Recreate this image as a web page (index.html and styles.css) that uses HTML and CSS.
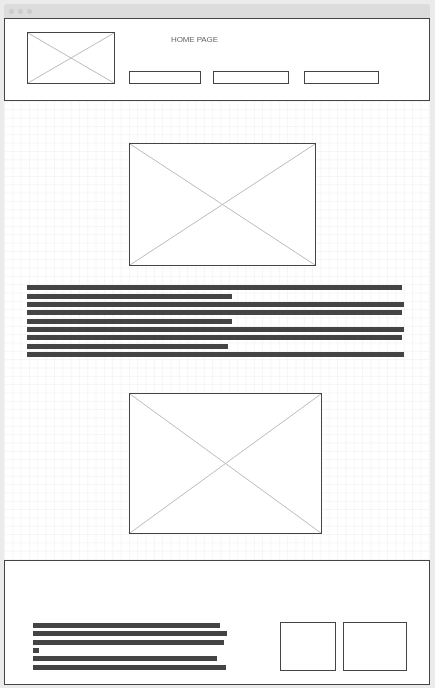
FILE: index.html
```html
<!DOCTYPE html>
<html lang="en">

<head>
    <meta charset="UTF-8">
    <meta name="viewport" content="width=device-width, initial-scale=1.0">
    <title>Home Page Wireframe</title>

    <link rel="stylesheet" href="styles.css">
</head>

<body>
    <div class="window">
        <div class="titlebar">
            <span class="dot"></span>
            <span class="dot"></span>
            <span class="dot"></span>
        </div>

        <div class="header">
            <div class="logo pic">
                <svg viewBox="0 0 100 100" preserveAspectRatio="none">
                    <line x1="0" y1="0" x2="100" y2="100" vector-effect="non-scaling-stroke" />
                    <line x1="100" y1="0" x2="0" y2="100" vector-effect="non-scaling-stroke" />
                </svg>
            </div>
            <div class="head-right">
                <div class="title">HOME PAGE</div>
                <ul class="nav">
                    <li class="btn1"></li>
                    <li class="btn2"></li>
                    <li class="btn3"></li>
                </ul>
            </div>
        </div>

        <div class="main">
            <div class="hero pic">
                <svg viewBox="0 0 100 100" preserveAspectRatio="none">
                    <line x1="0" y1="0" x2="100" y2="100" vector-effect="non-scaling-stroke" />
                    <line x1="100" y1="0" x2="0" y2="100" vector-effect="non-scaling-stroke" />
                </svg>
            </div>

            <div class="text">
                <div class="line w402"></div>
                <div class="line w232 gap"></div>
                <div class="line w404"></div>
                <div class="line w402"></div>
                <div class="line w232 gap"></div>
                <div class="line w404"></div>
                <div class="line w402"></div>
                <div class="line w228 gap"></div>
                <div class="line w404"></div>
            </div>

            <div class="second pic">
                <svg viewBox="0 0 100 100" preserveAspectRatio="none">
                    <line x1="0" y1="0" x2="100" y2="100" vector-effect="non-scaling-stroke" />
                    <line x1="100" y1="0" x2="0" y2="100" vector-effect="non-scaling-stroke" />
                </svg>
            </div>
        </div>

        <div class="footer">
            <div class="foot-text">
                <div class="line f1"></div>
                <div class="line f2"></div>
                <div class="line f3 gap"></div>
                <div class="line f4"></div>
                <div class="line f5"></div>
                <div class="line f6 gap"></div>
            </div>
            <div class="boxes">
                <div class="box box1"></div>
                <div class="box box2"></div>
            </div>
        </div>
    </div>
</body>

</html>
```

FILE: styles.css
```css
* {
    margin: 0;
    padding: 0;
    box-sizing: border-box;
}

body {
    background-color: #ebebeb;
    padding: 4px 0 0 4px;
    font-family: "Liberation Sans", Arial, sans-serif;
}

.window {
    width: 426px;
}

.titlebar {
    display: flex;
    height: 14px;
    gap: 4px;
    padding-left: 5px;
    align-items: center;
    border-radius: 3px 3px 0 0;
    background-color: #dcdcdc;
}

.dot {
    width: 5px;
    height: 5px;
    border-radius: 50%;
    background-color: #cbcbcb;
}

.pic {
    border: 1px solid #444;
    background-color: #fff;
}

.pic svg {
    display: block;
    width: 100%;
    height: 100%;
}

.pic line {
    stroke: #bbb;
    stroke-width: 1;
}

.header {
    display: flex;
    height: 83px;
    padding: 13px 0 0 22px;
    border: 1px solid #444;
    background-color: #fff;
}

.logo {
    width: 88px;
    height: 52px;
}

.head-right {
    display: flex;
    flex-direction: column;
    padding-left: 14px;
}

.title {
    height: 39px;
    padding: 3px 0 0 42px;
    color: #666;
    font-size: 8px;
    letter-spacing: -0.1px;
    will-change: transform;
}

.nav {
    display: flex;
    list-style: none;
}

.nav li {
    height: 13px;
    border: 1px solid #444;
}

.btn1 {
    width: 72px;
}

.btn2 {
    width: 76px;
    margin-left: 12px;
}

.btn3 {
    width: 75px;
    margin-left: 15px;
}

.main {
    height: 459px;
    padding-top: 42px;
    background-color: #fff;
    background-image:
        linear-gradient(to right, #f5f5f5 1px, transparent 1px),
        linear-gradient(to bottom, #f5f5f5 1px, transparent 1px);
    background-size: 8.33px 8.33px;
}

.hero {
    width: 187px;
    height: 123px;
    margin-left: 125px;
}

.text {
    display: flex;
    flex-direction: column;
    gap: 3px;
    padding: 19px 0 0 23px;
}

.line {
    height: 5px;
    background-color: #444;
}

.line.gap {
    margin-top: 1px;
}

.w402 {
    width: 375px;
}

.w404 {
    width: 377px;
}

.w232 {
    width: 205px;
}

.w228 {
    width: 201px;
}

.second {
    width: 193px;
    height: 141px;
    margin: 36px 0 0 125px;
}

.footer {
    display: flex;
    height: 125px;
    padding: 61px 0 0 28px;
    border: 1px solid #444;
    background-color: #fff;
}

.foot-text {
    display: flex;
    flex-direction: column;
    gap: 3px;
    width: 247px;
    padding-top: 1px;
}

.f1 {
    width: 187px;
}

.f2 {
    width: 194px;
}

.f3 {
    width: 191px;
}

.f4 {
    width: 6px;
}

.f5 {
    width: 184px;
}

.f6 {
    width: 193px;
}

.boxes {
    display: flex;
    gap: 7px;
}

.box {
    height: 49px;
    border: 1px solid #444;
}

.box1 {
    width: 56px;
}

.box2 {
    width: 64px;
}
```
